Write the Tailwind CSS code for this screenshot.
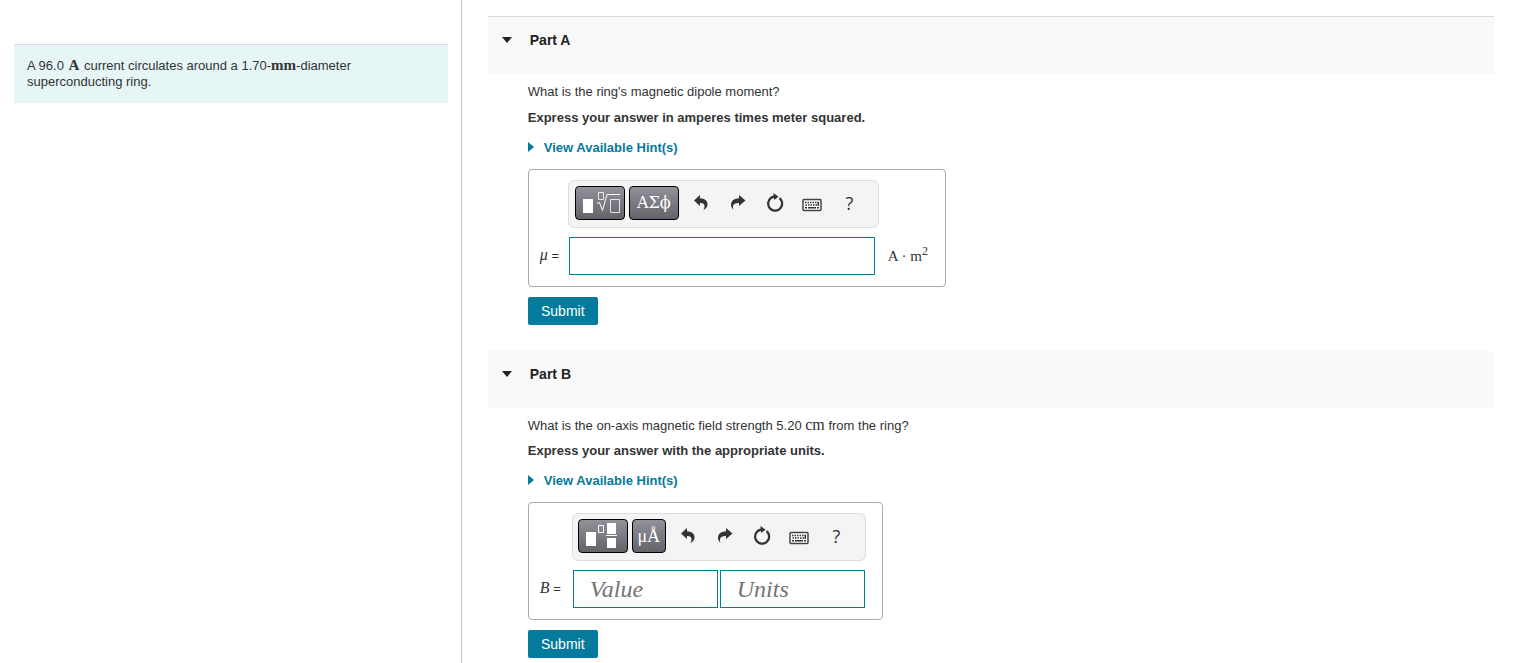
<!DOCTYPE html>
<html lang="en">
<head>
  <meta charset="UTF-8">
  <title>Magnetic dipole of a ring</title>
  <script src="https://cdn.jsdelivr.net/npm/@tailwindcss/browser@4"></script>
</head>
<body class="bg-white font-['Liberation_Sans',Arial,sans-serif] text-[13px] leading-4 text-[#333]">

  <!-- Shared icons -->
  <svg class="hidden">
    <symbol id="undo" viewBox="0 0 16 16">
      <path fill="#333" d="M7 0 1 5.500l6 5.500V8c2.800-.2 4.300.8 4.500 3 .1 1.400-.3 2.700-1.200 4.200 2.600-1.300 4.200-3.200 4.200-5.900C14.500 5.500 11.500 3.400 7 3.200z"/>
    </symbol>
    <symbol id="redo" viewBox="0 0 16 16">
      <path fill="#333" d="M9 0l6.500 5.500L9 11V8c-3.200-.1-5.700.7-6 3.200-.1 1.100 0 2.100.4 3.500C1.800 13.300 1 11.500 1 9.500 1.200 5.500 4.500 3.400 9 3.200z"/>
    </symbol>
    <symbol id="reset" viewBox="0 0 18 20">
      <path fill="none" stroke="#333" stroke-width="2.200" d="M13.500 5.200A7 7 0 1 1 8.500 3.700"/>
      <path fill="#333" d="M7.500 0l5 3.700-4.500 3.300z"/>
    </symbol>
    <symbol id="keyboard" viewBox="0 0 20 14">
      <rect x="1" y="1.500" width="18" height="11" rx="1" fill="#fff" stroke="#444" stroke-width="1.500"/>
      <path stroke="#333" stroke-width="1.500" stroke-dasharray="1.500 1" d="M3 4.500h14M3.500 7h13.500"/>
      <path stroke="#333" stroke-width="1.500" d="M3 9.800h2M6 9.800h8M15 9.800h2M16.300 4v4"/>
    </symbol>
  </svg>

  <div class="flex min-h-screen">
    <aside class="w-[30.5%] shrink-0 border-r border-[#b8c4cc] pt-11 pl-[14px] pr-[13px]">
      <div class="border-t border-[#dcdcdc] bg-[#e6f6f7] p-[13px]">
        <p class="max-w-[340px]">A 96.0 <span class="mx-px font-['Liberation_Serif',serif] text-[15px] leading-none font-bold">A</span> current circulates around a 1.70-<span class="font-['Liberation_Serif',serif] text-[15px] leading-none font-bold">mm</span>-diameter superconducting ring.</p>
      </div>
    </aside>

    <main class="min-w-0 grow pt-4 pl-[26px] pr-5">
      <section>
        <header class="border-t border-[#dcdcdc] bg-[#f9f9f9] pt-[15px] pb-[26px] pl-[14px]">
          <button type="button" class="flex items-center gap-[18px] text-sm leading-4 font-bold text-[#222]">
            <svg class="w-[10px] h-[6px]" viewBox="0 0 10 6"><path fill="#222" d="M0 0h10L5 6z"/></svg>
            <span>Part A</span>
          </button>
        </header>
        <div class="pt-[10px] pl-10">
          <p>What is the ring's magnetic dipole moment?</p>
          <p class="mt-[10px] font-bold">Express your answer in amperes times meter squared.</p>
          <a href="#" class="mt-[14px] flex w-fit items-center gap-[10px] font-bold text-[#047a9c]">
            <svg class="w-[6px] h-3" viewBox="0 0 6 12"><path fill="#047a9c" d="M0 0l6 5-6 5z"/></svg>
            View Available Hint(s)
          </a>
          <form>
            <div class="mt-[13px] w-fit rounded border border-[#aaa] pt-[10px] pr-[17px] pb-[11px]">
              <div class="ml-[39px] flex h-12 w-[311px] items-start rounded-md border border-[#ddd] bg-[#f4f4f4] pt-[5px] pl-[6px]">
                <button type="button" aria-label="Templates" class="h-[34px] w-[50px] rounded border border-black bg-linear-to-b from-[#93929b] to-[#63636a]">
                  <svg class="w-12 h-8" viewBox="0 0 48 32" fill="none" stroke="#fff">
                    <rect x="7" y="12" width="10" height="14" fill="#fff" stroke="none"/>
                    <path stroke-opacity=".8" d="M22.500 5.500h5v7h-5zM34.500 12.500h9v13h-9z"/>
                    <path d="M21 16.500l2.500-1 3 8L31 7.500h13"/>
                  </svg>
                </button>
                <button type="button" class="ml-1 h-[34px] w-[50px] rounded border border-black bg-linear-to-b from-[#93929b] to-[#63636a] font-['DejaVu_Serif',serif] text-base leading-8 text-white">ΑΣϕ</button>
                <div class="ml-1 flex h-[34px] text-[#333]">
                  <button type="button" aria-label="Undo" class="flex w-[37px] items-center justify-center"><svg class="size-4"><use href="#undo"/></svg></button>
                  <button type="button" aria-label="Redo" class="flex w-[37px] items-center justify-center"><svg class="size-4"><use href="#redo"/></svg></button>
                  <button type="button" aria-label="Reset" class="flex w-[37px] items-center justify-center"><svg class="w-[18px] h-5"><use href="#reset"/></svg></button>
                  <button type="button" aria-label="Keyboard shortcuts" class="flex w-[37px] items-center justify-center pt-1"><svg class="w-5 h-[14px]"><use href="#keyboard"/></svg></button>
                  <button type="button" aria-label="Help" class="w-[37px] font-['Open_Sans',sans-serif] text-lg leading-8">?</button>
                </div>
              </div>
              <div class="mt-[9px] flex items-center pl-[11px]">
                <label for="mu" class="w-[29px] pb-[2px] whitespace-nowrap"><i class="font-['Liberation_Serif',serif] text-base leading-4">μ</i> =</label>
                <input id="mu" type="text" class="h-[38px] w-[306px] border border-[#047a9c] bg-white px-4 text-2xl">
                <span class="ml-[13px] font-['Liberation_Serif',serif] text-[15px] leading-4">A · m<sup class="text-xs">2</sup></span>
              </div>
            </div>
            <button type="submit" class="mt-[10px] h-7 w-[70px] rounded-xs bg-[#047a9c] text-sm text-white">Submit</button>
          </form>
        </div>
      </section>

      <section class="mt-[26px]">
        <header class="bg-[#f9f9f9] pt-[15px] pb-[26px] pl-[14px]">
          <button type="button" class="flex items-center gap-[18px] text-sm leading-4 font-bold text-[#222]">
            <svg class="w-[10px] h-[6px]" viewBox="0 0 10 6"><path fill="#222" d="M0 0h10L5 6z"/></svg>
            <span>Part B</span>
          </button>
        </header>
        <div class="pt-[9px] pl-10">
          <p>What is the on-axis magnetic field strength 5.20 <span class="font-['Liberation_Serif',serif] text-base leading-none">cm</span> from the ring?</p>
          <p class="mt-[9px] font-bold">Express your answer with the appropriate units.</p>
          <a href="#" class="mt-[14px] flex w-fit items-center gap-[10px] font-bold text-[#047a9c]">
            <svg class="w-[6px] h-3" viewBox="0 0 6 12"><path fill="#047a9c" d="M0 0l6 5-6 5z"/></svg>
            View Available Hint(s)
          </a>
          <form>
            <div class="mt-[13px] w-fit rounded border border-[#aaa] pt-[10px] pr-4 pb-[11px]">
              <div class="ml-[43px] flex h-12 w-[294px] items-start rounded-md border border-[#ddd] bg-[#f4f4f4] pt-[5px] pl-[5px]">
                <button type="button" aria-label="Templates" class="h-[34px] w-[50px] rounded border border-black bg-linear-to-b from-[#93929b] to-[#63636a]">
                  <svg class="w-12 h-8" viewBox="0 0 48 32" fill="#fff">
                    <path d="M7 12h10v14H7zM28 3h9v11h-9zM27 15h11v1H27zM28 18h9v10h-9z"/>
                    <path fill="none" stroke="#fff" d="M19.500 5.500h5v7h-5z"/>
                  </svg>
                </button>
                <button type="button" class="ml-1 h-[34px] w-[34px] rounded border border-black bg-linear-to-b from-[#93929b] to-[#63636a] font-['Liberation_Serif',serif] text-lg leading-8 text-white">μÅ</button>
                <div class="ml-1 flex h-[34px] text-[#333]">
                  <button type="button" aria-label="Undo" class="flex w-[37px] items-center justify-center"><svg class="size-4"><use href="#undo"/></svg></button>
                  <button type="button" aria-label="Redo" class="flex w-[37px] items-center justify-center"><svg class="size-4"><use href="#redo"/></svg></button>
                  <button type="button" aria-label="Reset" class="flex w-[37px] items-center justify-center"><svg class="w-[18px] h-5"><use href="#reset"/></svg></button>
                  <button type="button" aria-label="Keyboard shortcuts" class="flex w-[37px] items-center justify-center pt-1"><svg class="w-5 h-[14px]"><use href="#keyboard"/></svg></button>
                  <button type="button" aria-label="Help" class="w-[37px] font-['Open_Sans',sans-serif] text-lg leading-8">?</button>
                </div>
              </div>
              <div class="mt-[9px] flex items-center pl-[11px]">
                <label for="field" class="w-[33px] pb-[2px] whitespace-nowrap"><i class="font-['Liberation_Serif',serif] text-base leading-4">B</i> =</label>
                <input id="field" type="text" placeholder="Value" class="h-[38px] w-[145px] border border-[#047a9c] bg-white px-4 font-['Liberation_Serif',serif] text-2xl placeholder:italic placeholder:text-[#757575]">
                <input type="text" aria-label="Units" placeholder="Units" class="ml-[2px] h-[38px] w-[145px] border border-[#047a9c] bg-white px-4 font-['Liberation_Serif',serif] text-2xl placeholder:italic placeholder:text-[#757575]">
              </div>
            </div>
            <button type="submit" class="mt-[10px] h-7 w-[70px] rounded-xs bg-[#047a9c] text-sm text-white">Submit</button>
          </form>
        </div>
      </section>
    </main>
  </div>
</body>
</html>
